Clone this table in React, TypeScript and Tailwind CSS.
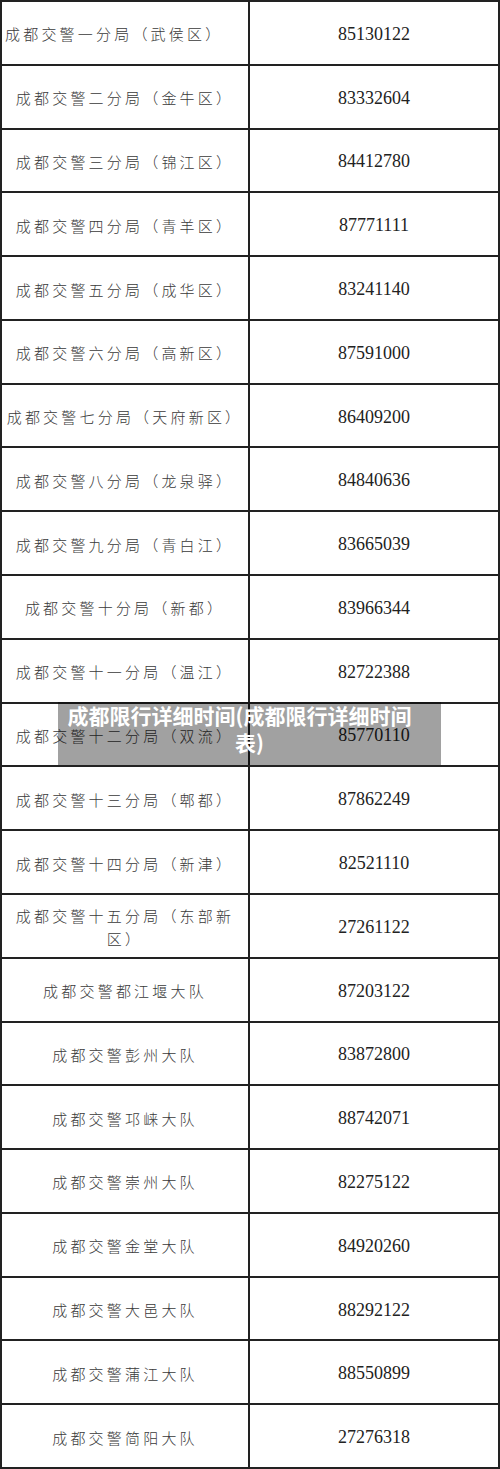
const rows: [string, string][] = [
  ["成都交警一分局（武侯区）", "85130122"],
  ["成都交警二分局（金牛区）", "83332604"],
  ["成都交警三分局（锦江区）", "84412780"],
  ["成都交警四分局（青羊区）", "87771111"],
  ["成都交警五分局（成华区）", "83241140"],
  ["成都交警六分局（高新区）", "87591000"],
  ["成都交警七分局（天府新区）", "86409200"],
  ["成都交警八分局（龙泉驿）", "84840636"],
  ["成都交警九分局（青白江）", "83665039"],
  ["成都交警十分局（新都）", "83966344"],
  ["成都交警十一分局（温江）", "82722388"],
  ["成都交警十二分局（双流）", "85770110"],
  ["成都交警十三分局（郫都）", "87862249"],
  ["成都交警十四分局（新津）", "82521110"],
  ["成都交警十五分局（东部新区）", "27261122"],
  ["成都交警都江堰大队", "87203122"],
  ["成都交警彭州大队", "83872800"],
  ["成都交警邛崃大队", "88742071"],
  ["成都交警崇州大队", "82275122"],
  ["成都交警金堂大队", "84920260"],
  ["成都交警大邑大队", "88292122"],
  ["成都交警蒲江大队", "88550899"],
  ["成都交警简阳大队", "27276318"],
];

export default function App() {
  return (
    <div className="relative w-[500px] h-[1469px] bg-white">
      <div className="flex flex-col h-full border-2 border-[#222]">
        {rows.map(([name, phone], i) => (
          <div
            key={name}
            className={`flex flex-1 ${i > 0 ? "border-t-2 border-[#222]" : ""}`}
          >
            <div
              className={`w-[248px] flex items-center border-r-2 border-[#222] text-[15px] leading-[23px] tracking-[3.2px] text-[#3a3a3a] font-light ${
                i === 0
                  ? "justify-start pl-[3px]"
                  : i === 6
                    ? "justify-center whitespace-nowrap"
                    : "justify-center text-center px-[10px]"
              }`}
              style={{ fontFamily: '"Noto Sans CJK SC", sans-serif' }}
            >
              <span className="pt-[2px]">{name}</span>
            </div>
            <div
              className="flex-1 flex items-center justify-center text-[18px] text-[#222] pt-[3px]"
              style={{ fontFamily: '"Liberation Serif", serif' }}
            >
              {phone}
            </div>
          </div>
        ))}
      </div>
      <div
        className="absolute left-[58px] top-[702px] w-[383px] h-[63px] bg-[rgba(0,0,0,0.37)] text-white font-bold text-[21px] leading-[27px]"
        style={{ fontFamily: '"Noto Sans CJK SC", sans-serif' }}
      >
        <div className="text-center pr-[20px]">成都限行详细时间(成都限行详细时间</div>
        <div className="text-center">表)</div>
      </div>
    </div>
  );
}
